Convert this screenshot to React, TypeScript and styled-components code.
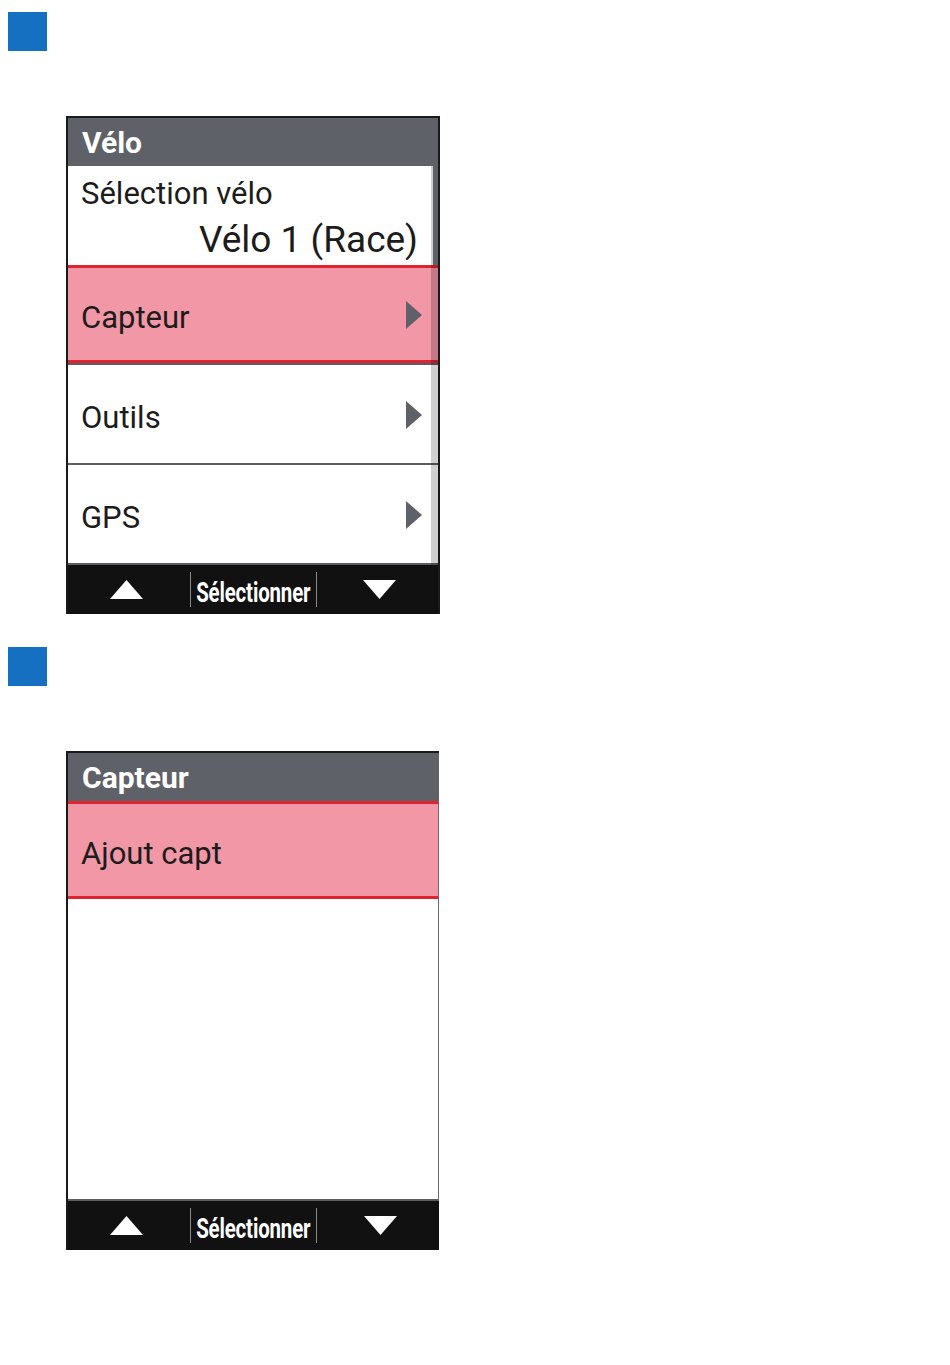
import React from "react";
import styled, { createGlobalStyle } from "styled-components";

const GlobalStyle = createGlobalStyle`
  html, body {
    margin: 0;
    padding: 0;
    background: #ffffff;
  }
  body {
    font-family: Roboto, "Noto Sans", "Liberation Sans", Arial, sans-serif;
  }
`;

const Page = styled.div`
  display: flex;
  flex-direction: column;
  padding: 12px 0 0 8px;
`;

const Step = styled.section`
  display: flex;
  flex-direction: column;
  & + & {
    margin-top: 33px;
  }
`;

const StepMarker = styled.div`
  width: 39px;
  height: 39px;
  background: #1670c2;
`;

const Screen = styled.div<{ $right: string; $width: number }>`
  margin: 65px 0 0 58px;
  width: ${(p) => p.$width}px;
  box-sizing: border-box;
  border-top: 2px solid #1a1a1a;
  border-left: 2px solid #1a1a1a;
  border-right: ${(p) => p.$right};
  display: flex;
  flex-direction: column;
  background: #ffffff;
`;

const TitleBar = styled.div`
  height: 48px;
  padding-left: 14px;
  background: #5f6168;
  color: #ffffff;
  font-size: 30px;
  font-weight: 700;
  line-height: 50px;
  overflow: hidden;
`;

const MenuList = styled.div<{ $edge?: boolean }>`
  position: relative;
  display: flex;
  flex-direction: column;
  border-right: ${(p) => (p.$edge ? "1px solid #6a6a6a" : "none")};
`;

const ValueRow = styled.div`
  height: 99px;
  box-sizing: border-box;
  padding: 12px 20px 7px 13px;
  display: flex;
  flex-direction: column;
  color: #1c1c1c;
`;

const ValueLabel = styled.div`
  font-size: 31px;
  line-height: 31px;
`;

const ValueText = styled.div`
  margin-top: 12px;
  align-self: flex-end;
  font-size: 37px;
  line-height: 37px;
`;

const Item = styled.div<{ $divider: boolean }>`
  border-bottom: ${(p) => (p.$divider ? "2px solid #5b5d63" : "none")};
`;

const ItemBody = styled.div<{ $selected: boolean }>`
  height: 98px;
  box-sizing: border-box;
  padding: 7px 16px 0 13px;
  display: flex;
  align-items: center;
  justify-content: space-between;
  background: ${(p) => (p.$selected ? "#f297a5" : "#ffffff")};
  border-top: ${(p) => (p.$selected ? "3px solid #e0232e" : "none")};
  border-bottom: ${(p) => (p.$selected ? "3px solid #e0232e" : "none")};
  color: #1c1c1c;
`;

const ItemLabel = styled.span`
  font-size: 31px;
  line-height: 31px;
`;

const Chevron = styled.svg`
  width: 16px;
  height: 28px;
  margin-top: -5px;
  flex: none;
`;

const EmptySpace = styled.div`
  height: 300px;
  background: #ffffff;
`;

const ScrollTrack = styled.div`
  position: absolute;
  top: 0;
  right: 0;
  bottom: 0;
  width: 7px;
  background: rgba(0, 0, 0, 0.19);
`;

const ScrollThumb = styled.div<{ $size: number }>`
  position: absolute;
  top: 0;
  left: 2px;
  right: 0;
  height: ${(p) => p.$size}px;
  background: #5f6168;
`;

const SoftKeys = styled.div<{ $line: boolean }>`
  height: 49px;
  display: grid;
  grid-template-columns: 1fr 127px 1fr;
  align-items: center;
  background: #111111;
  border-top: ${(p) => (p.$line ? "2px solid #5b5d63" : "none")};
`;

const SoftKey = styled.div<{ $side: "left" | "right" }>`
  display: flex;
  justify-content: center;
  padding-right: ${(p) => (p.$side === "left" ? "5px" : "0")};
  padding-left: ${(p) => (p.$side === "right" ? "4px" : "0")};
`;

const SelectKey = styled.div`
  height: 35px;
  box-sizing: border-box;
  padding-top: 6px;
  display: flex;
  align-items: center;
  justify-content: center;
  overflow: visible;
  border-left: 1px solid #8a8a8a;
  border-right: 1px solid #8a8a8a;
`;

const SelectText = styled.span`
  display: inline-block;
  color: #ffffff;
  font-size: 28px;
  font-weight: 700;
  line-height: 28px;
  letter-spacing: -0.2px;
  transform: scaleX(0.73);
  white-space: nowrap;
`;

const KeyArrow = styled.svg`
  width: 33px;
  height: 19px;
  display: block;
`;

const ChevronIcon = () => (
  <Chevron viewBox="0 0 16 28">
    <polygon points="0,0 16,14 0,28" fill="#5f6168" />
  </Chevron>
);

const Footer = ({ line }: { line: boolean }) => (
  <SoftKeys $line={line}>
    <SoftKey $side="left">
      <KeyArrow viewBox="0 0 33 19">
        <polygon points="0,19 16.5,0 33,19" fill="#ffffff" />
      </KeyArrow>
    </SoftKey>
    <SelectKey>
      <SelectText>Sélectionner</SelectText>
    </SelectKey>
    <SoftKey $side="right">
      <KeyArrow viewBox="0 0 33 19">
        <polygon points="0,0 33,0 16.5,19" fill="#ffffff" />
      </KeyArrow>
    </SoftKey>
  </SoftKeys>
);

const menu = [
  { label: "Capteur", selected: true },
  { label: "Outils", selected: false },
  { label: "GPS", selected: false },
];

export default function App() {
  return (
    <>
      <GlobalStyle />
      <Page>
        <Step>
          <StepMarker />
          <Screen $right="2px solid #1a1a1a" $width={374}>
            <TitleBar>Vélo</TitleBar>
            <MenuList>
              <ValueRow>
                <ValueLabel>Sélection vélo</ValueLabel>
                <ValueText>Vélo 1 (Race)</ValueText>
              </ValueRow>
              {menu.map((m) => (
                <Item key={m.label} $divider>
                  <ItemBody $selected={m.selected}>
                    <ItemLabel>{m.label}</ItemLabel>
                    <ChevronIcon />
                  </ItemBody>
                </Item>
              ))}
              <ScrollTrack>
                <ScrollThumb $size={99} />
              </ScrollTrack>
            </MenuList>
            <Footer line={false} />
          </Screen>
        </Step>
        <Step>
          <StepMarker />
          <Screen $right="none" $width={373}>
            <TitleBar>Capteur</TitleBar>
            <MenuList $edge>
              <Item $divider={false}>
                <ItemBody $selected>
                  <ItemLabel>Ajout capt</ItemLabel>
                </ItemBody>
              </Item>
              <EmptySpace />
            </MenuList>
            <Footer line />
          </Screen>
        </Step>
      </Page>
    </>
  );
}
